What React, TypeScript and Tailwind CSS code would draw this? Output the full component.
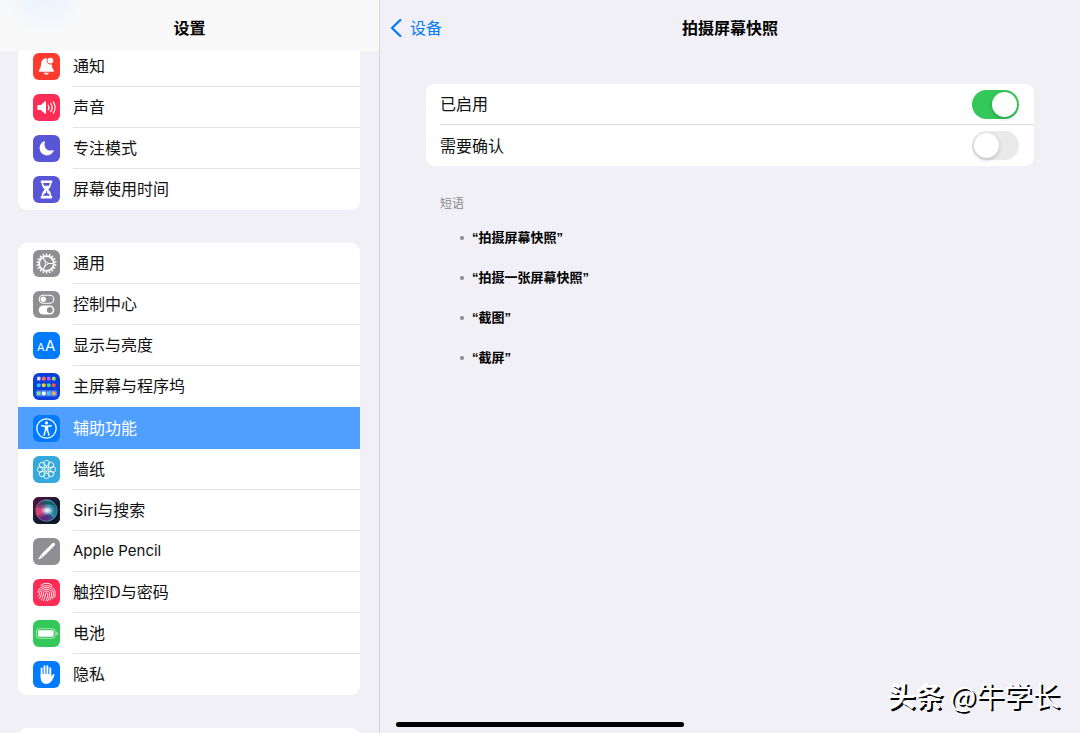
import { useState } from 'react'
import type { ReactNode } from 'react'
import clsx from 'clsx'

type Item = {
  id: string
  label: string
  tile: string
  icon: ReactNode
  latin?: boolean
}

const dots = [
  ['#e4d8ff', '#ff6b5e', '#c45cf0', '#9be25a'],
  ['#35c8ff', '#ffc93c', '#3fe08a', '#ff5148'],
]

const gearTeeth = Array.from({ length: 18 }, (_, i) => i * 20)
const petals = Array.from({ length: 8 }, (_, i) => i * 45)

const alerts: Item[] = [
  {
    id: 'notifications',
    label: '通知',
    tile: 'bg-[#ff3b30]',
    icon: (
      <>
        <path
          fill="#fff"
          d="M12.6 5.2c-2.9.5-4.3 2.7-4.5 5.4-.2 3.2-.5 4.7-2 6.3-.6.7-.4 1.8.7 1.8h13.2c1.1 0 1.3-1.1.7-1.8-1.3-1.4-1.7-2.8-1.9-5.5a4 4 0 0 1-4.6-5.8z"
        />
        <circle cx="17.4" cy="7.6" r="2.9" fill="#fff" />
        <path fill="#fff" d="M10.9 19.7h5c-.3 1.3-1.2 2-2.5 2s-2.2-.7-2.5-2z" />
      </>
    ),
  },
  {
    id: 'sounds',
    label: '声音',
    tile: 'bg-[#ff2d55]',
    icon: (
      <>
        <path
          fill="#fff"
          d="M5.3 11h2.5l4-3.4c.6-.5 1.2-.2 1.2.5v10.8c0 .7-.6 1-1.2.5l-4-3.4H5.3c-.6 0-.9-.4-.9-.9v-3.2c0-.5.3-.9.9-.9z"
        />
        <g fill="none" stroke="#fff" strokeWidth="1.2" strokeLinecap="round">
          <path d="M15.3 11.3a4 4 0 0 1 0 4.4" />
          <path d="M17.8 9.5a7 7 0 0 1 0 8" />
          <path d="M20.3 7.9a10 10 0 0 1 0 11.2" />
        </g>
      </>
    ),
  },
  {
    id: 'focus',
    label: '专注模式',
    tile: 'bg-[#5856d6]',
    icon: (
      <path
        fill="#fff"
        d="M11.2 6.3c.5-.2.9.2.7.7-1.8 5.5 2.5 10 8 8.2.6-.2 1 .2.7.8a7.3 7.3 0 1 1-9.4-9.7z"
      />
    ),
  },
  {
    id: 'screen-time',
    label: '屏幕使用时间',
    tile: 'bg-[#5856d6]',
    icon: (
      <>
        <path
          fill="#fff"
          d="M8.5 4.5h10c.5 0 .8.3.8.8v.9c0 .5-.3.8-.8.8h-.2c-.1 3-1.2 4.7-3.1 6.5 1.9 1.8 3 3.5 3.1 6.5h.2c.5 0 .8.3.8.8v.9c0 .5-.3.8-.8.8h-10c-.5 0-.8-.3-.8-.8v-.9c0-.5.3-.8.8-.8h.2c.1-3 1.2-4.7 3.1-6.5-1.9-1.8-3-3.5-3.1-6.5h-.2c-.5 0-.8-.3-.8-.8v-.9c0-.5.3-.8.8-.8z"
        />
        <path
          fill="#5856d6"
          d="M10.2 7h6.6c-.1 1-.4 1.9-.8 2.7h-5c-.4-.8-.7-1.7-.8-2.7zM13 15.3h1v1.8c1.5.4 2.5 1.2 2.8 2.6h-6.6c.3-1.4 1.3-2.2 2.8-2.6z"
        />
      </>
    ),
  },
]

const general: Item[] = [
  {
    id: 'general',
    label: '通用',
    tile: 'bg-[#8e8e93]',
    icon: (
      <g stroke="#fff" fill="none">
        {gearTeeth.map((a) => (
          <path key={a} d="M13.5 3.5v2.2" strokeWidth="1.5" transform={`rotate(${a} 13.5 13.5)`} />
        ))}
        <circle cx="13.5" cy="13.5" r="7.3" strokeWidth="1.7" />
        <circle cx="13.5" cy="13.5" r="1.3" strokeWidth="1" />
        <path strokeWidth="1.2" d="M14.8 13.5h6M12.8 12.4l-3-5.2M12.8 14.6l-3 5.2" />
      </g>
    ),
  },
  {
    id: 'control-center',
    label: '控制中心',
    tile: 'bg-[#8e8e93]',
    icon: (
      <>
        <rect x="6.2" y="4.2" width="14.6" height="8" rx="4" fill="none" stroke="#fff" strokeWidth="1.1" />
        <circle cx="10.3" cy="8.2" r="2.7" fill="#fff" />
        <rect x="5.7" y="14.5" width="15.6" height="9" rx="4.5" fill="#fff" />
        <circle cx="16.8" cy="19" r="2.9" fill="#8e8e93" />
      </>
    ),
  },
  {
    id: 'display',
    label: '显示与亮度',
    tile: 'bg-[#007aff]',
    icon: (
      <g fill="#fff" fontFamily="Inter, sans-serif">
        <text x="4" y="19" fontSize="11">A</text>
        <text x="12" y="19" fontSize="15">A</text>
      </g>
    ),
  },
  {
    id: 'home-screen',
    label: '主屏幕与程序坞',
    tile: 'bg-[#0b3fdb]',
    icon: (
      <>
        {dots.map((row, y) =>
          row.map((color, x) => (
            <rect key={`${x}-${y}`} x={4 + x * 5} y={3.8 + y * 6.6} width="3.6" height="3.6" rx=".9" fill={color} />
          )),
        )}
        <rect x="2.7" y="17.3" width="21.6" height="6.2" rx="2" fill="#4f7df0" />
        <rect x="4" y="18.6" width="3.6" height="3.6" rx=".9" fill="#7be88a" />
        <rect x="9" y="18.6" width="3.6" height="3.6" rx=".9" fill="#fff" />
        <rect x="14" y="18.6" width="3.6" height="3.6" rx=".9" fill="#43c6ff" />
        <rect x="19" y="18.6" width="3.6" height="3.6" rx=".9" fill="#ffa25c" />
      </>
    ),
  },
  {
    id: 'accessibility',
    label: '辅助功能',
    tile: 'bg-[#007aff]',
    icon: (
      <>
        <circle cx="13.5" cy="13.5" r="9.7" fill="none" stroke="#fff" strokeWidth="1.3" />
        <circle cx="13.5" cy="7.9" r="1.6" fill="#fff" />
        <path
          fill="none"
          stroke="#fff"
          strokeWidth="1.4"
          strokeLinecap="round"
          strokeLinejoin="round"
          d="M8.6 10.7l3.9.5h2l3.9-.5M12.5 11.2v4l-1.5 5M14.5 11.2v4l1.5 5"
        />
        <path fill="#fff" d="M12.1 11h2.8v4.6h-2.8z" />
      </>
    ),
  },
  {
    id: 'wallpaper',
    label: '墙纸',
    tile: 'bg-[#34aadc]',
    icon: (
      <g fill="none" stroke="#fff" strokeWidth=".9">
        {petals.map((a) => (
          <circle key={a} cx="13.5" cy="7.2" r="2.8" transform={`rotate(${a} 13.5 13.5)`} />
        ))}
        {petals.map((a) => (
          <path key={a} d="M13.5 10v1.8" transform={`rotate(${a} 13.5 13.5)`} />
        ))}
        <circle cx="13.5" cy="13.5" r="1.8" />
      </g>
    ),
  },
  {
    id: 'siri',
    label: 'Siri与搜索',
    tile: 'bg-[#1b1230]',
    icon: (
      <>
        <defs>
          <linearGradient id="siri-back" x1="0" y1="0" x2="1" y2="1">
            <stop offset="0" stopColor="#5a1040" />
            <stop offset=".5" stopColor="#191a38" />
            <stop offset="1" stopColor="#071823" />
          </linearGradient>
          <linearGradient id="siri-orb" x1="0" y1=".6" x2="1" y2=".4">
            <stop offset="0" stopColor="#c01f62" />
            <stop offset=".4" stopColor="#7d4a86" />
            <stop offset=".65" stopColor="#2f9fa8" />
            <stop offset="1" stopColor="#1a5f8a" />
          </linearGradient>
          <radialGradient id="siri-glow">
            <stop offset="0" stopColor="#fff" />
            <stop offset=".35" stopColor="#e4f0ff" stopOpacity=".8" />
            <stop offset="1" stopColor="#8fb8ff" stopOpacity="0" />
          </radialGradient>
        </defs>
        <rect width="27" height="27" fill="url(#siri-back)" />
        <circle cx="13.5" cy="13.5" r="10.8" fill="url(#siri-orb)" />
        <path fill="#0f4a50" opacity=".7" d="M4 9.5a10.8 10.8 0 0 1 19 0c-5-3-13-3-19 0z" />
        <path fill="#3a1a78" opacity=".6" d="M5 20c4 .2 8-1 10-4l6 5a10.500 10.500 0 0 1-16-1z" />
        <path fill="#e8476e" opacity=".8" d="M3.5 11c4-.5 7 .5 10 2.5-3 2.5-6 4.5-9.5 4.5z" />
        <ellipse cx="14.2" cy="13.5" rx="7" ry="5" fill="url(#siri-glow)" />
        <circle cx="13.5" cy="13.5" r="10.8" fill="none" stroke="#8ad6c8" strokeWidth=".6" opacity=".7" />
      </>
    ),
  },
  {
    id: 'pencil',
    label: 'Apple Pencil',
    latin: true,
    tile: 'bg-[#8e8e93]',
    icon: (
      <>
        <path stroke="#fff" strokeWidth="3.2" strokeLinecap="round" d="M9.2 17.7L20.5 6.4" />
        <path fill="#fff" d="M7.6 17.2l2.2 2.2-3.8 1.9c-.5.2-.8-.1-.6-.6z" />
        <path stroke="#8e8e93" strokeWidth=".7" d="M7.4 16.8l2.9 2.9" />
      </>
    ),
  },
  {
    id: 'touch-id',
    label: '触控ID与密码',
    tile: 'bg-[#ff2d55]',
    icon: (
      <g fill="none" stroke="#fff" strokeWidth=".9" strokeLinecap="round">
        <path d="M8 6.1a9.4 9.4 0 0 1 11 0" />
        <path d="M4.9 13.5c.2-3.7 3.9-6.9 8.6-6.9s8.600 3.100 8.700 8c0 1.300-.2 2.500-.5 3.600" />
        <path d="M5.3 17.6c1.1-1.3 1.2-2.8 1.4-4.3.5-2.8 3.2-4.9 6.8-4.9 4 0 6.9 2.5 6.9 6.2 0 1.9-.4 3.6-1 5.1" />
        <path d="M6.4 19.5c1.5-1.8 1.9-3.6 2.1-5.6.2-2.1 2.2-3.7 5-3.7s5.1 1.6 5.1 4.4c0 2.4-.6 4.6-1.6 6.4" />
        <path d="M8.2 20.9c1.5-2 2.1-4.1 2.2-6.5.1-1.5 1.4-2.4 3.1-2.4s3.2 1 3.2 2.7c0 2.700-.8 5-2.100 7.100" />
        <path d="M10.4 21.7c1.2-2 1.8-4.2 1.9-6.8 0-1.4 2.4-1.5 2.5 0-.1 2.5-.7 4.7-1.9 6.9" />
      </g>
    ),
  },
  {
    id: 'battery',
    label: '电池',
    tile: 'bg-[#34c759]',
    icon: (
      <>
        <rect x="3.4" y="8.7" width="18.8" height="9.6" rx="2.8" fill="none" stroke="#fff" strokeWidth=".8" opacity=".7" />
        <rect x="5" y="10.2" width="15.6" height="6.6" rx="1.3" fill="#fff" />
        <path fill="#fff" opacity=".7" d="M23.3 11.6c.9.3 1.3 1 1.3 1.9s-.4 1.6-1.3 1.9z" />
      </>
    ),
  },
  {
    id: 'privacy',
    label: '隐私',
    tile: 'bg-[#007aff]',
    icon: (
      <>
        <g stroke="#fff" strokeWidth="1.9" strokeLinecap="round" fill="none">
          <path d="M8.6 7.5v8M11.5 5.3v9M14.4 5.2v9M17.3 7.2v9" />
        </g>
        <path
          fill="#fff"
          d="M7.65 13h10.6v2.8l1.7-2.3c.5-.7 1.6-.5 1.4.4-.6 2.7-1.9 5-3.4 6.9-1.2 1.5-2.7 2.1-4.7 2.1-3.3 0-5.6-2.5-5.6-6.1z"
        />
      </>
    ),
  },
]

const phrases = ['拍摄屏幕快照', '拍摄一张屏幕快照', '截图', '截屏']

function NavRow({
  item,
  active,
  line,
  onSelect,
}: {
  item: Item
  active: boolean
  line: boolean
  onSelect: (id: string) => void
}) {
  return (
    <li>
      <a
        href={`#${item.id}`}
        aria-current={active ? 'page' : undefined}
        onClick={() => onSelect(item.id)}
        className={clsx(
          'flex items-center gap-[13px] pl-[15px]',
          active ? 'h-[42px] bg-[#4e9fff] text-white' : 'h-[41px]',
        )}
      >
        <span className={clsx('size-[27px] shrink-0 overflow-hidden rounded-md', item.tile)}>
          <svg viewBox="0 0 27 27" className="size-full" aria-hidden="true">
            {item.icon}
          </svg>
        </span>
        <span
          className={clsx(
            'flex h-full flex-1 items-center border-b',
            line ? 'border-[#e2e2e4]' : 'border-transparent',
            item.latin && 'text-[15px]',
          )}
        >
          {item.label}
        </span>
      </a>
    </li>
  )
}

function NavGroup({
  items,
  active,
  className,
  onSelect,
}: {
  items: Item[]
  active: string
  className: string
  onSelect: (id: string) => void
}) {
  return (
    <ul className={clsx('shrink-0 overflow-hidden bg-white', className)}>
      {items.map((item, i) => (
        <NavRow
          key={item.id}
          item={item}
          active={item.id === active}
          line={i < items.length - 1 && item.id !== active && items[i + 1].id !== active}
          onSelect={onSelect}
        />
      ))}
    </ul>
  )
}

function SwitchRow({ id, label, on, line }: { id: string; label: string; on: boolean; line?: boolean }) {
  return (
    <div className="pl-3.5">
      <div className={clsx('flex h-[41px] items-center justify-between pr-[15px]', line && 'border-b border-[#dcdcde]')}>
        <label htmlFor={id}>{label}</label>
        <input
          id={id}
          type="checkbox"
          role="switch"
          defaultChecked={on}
          className="h-[29px] w-[47px] cursor-pointer appearance-none rounded-full bg-[#e9e9ea] p-0.5 before:block before:size-[25px] before:rounded-full before:bg-white before:shadow-[0_2px_4px_rgba(0,0,0,0.18)] checked:bg-[#34c759] checked:before:translate-x-[18px]"
        />
      </div>
    </div>
  )
}

export default function App() {
  const [active, setActive] = useState('accessibility')

  return (
    <div
      lang="zh-CN"
      className="relative flex h-screen overflow-hidden bg-[#f1f0f6] font-['Inter','Noto_Sans_CJK_SC',sans-serif] text-base text-[#111]"
    >
      <aside className="flex w-[380px] shrink-0 flex-col overflow-hidden border-r border-[#d6d6da]">
        <header className="z-10 flex h-[51px] shrink-0 items-center justify-center bg-[#f9f9f9] bg-[radial-gradient(circle_at_45px_-8px,#e8f2ff_0,#f9f9f9_44px)] pt-1">
          <h1 className="font-semibold text-black">设置</h1>
        </header>

        {/* the list is scrolled a little way under the header */}
        <nav className="-mt-[5px] flex flex-col gap-[33px] pr-[19px] pl-[18px]">
          <NavGroup items={alerts} active={active} className="rounded-b-[9px]" onSelect={setActive} />
          <NavGroup items={general} active={active} className="rounded-[9px]" onSelect={setActive} />
          <div className="h-20 shrink-0 rounded-[9px] bg-white" />
        </nav>
      </aside>

      <main className="min-w-0 flex-1">
        <header className="grid h-[51px] grid-cols-[1fr_auto_1fr] items-center px-2.5 pt-1">
          <a href="#devices" className="flex items-center gap-2 text-[#007aff]">
            <svg
              viewBox="0 0 12 20"
              className="h-5 w-3"
              fill="none"
              stroke="currentColor"
              strokeWidth="2.3"
              strokeLinecap="round"
              strokeLinejoin="round"
              aria-hidden="true"
            >
              <path d="M10.3 2L2 10l8.3 8" />
            </svg>
            设备
          </a>
          <h2 className="font-semibold text-black">拍摄屏幕快照</h2>
        </header>

        <div className="px-[46px] pt-[33px]">
          <section className="overflow-hidden rounded-[9px] bg-white">
            <SwitchRow id="enabled" label="已启用" on line />
            <SwitchRow id="confirm" label="需要确认" on={false} />
          </section>

          <section className="px-3.5 pt-7">
            <h3 className="text-xs leading-5 text-[#8a8a8e]">短语</h3>
            <ul className="pt-1 pl-5 font-['Liberation_Sans','Noto_Sans_CJK_SC',sans-serif]">
              {phrases.map((p) => (
                <li key={p} className="flex h-10 items-center gap-2 text-[13px] font-semibold text-black">
                  <span className="size-1 rounded-full bg-[#8a8a8e]" />
                  “{p}”
                </li>
              ))}
            </ul>
          </section>
        </div>
      </main>

      <p className="absolute right-5 bottom-[18px] font-['Noto_Sans_CJK_SC',sans-serif] text-[28px] leading-10 text-white [text-shadow:2px_2px_0_#000]">
        <span className="font-bold">头条</span> @牛学长
      </p>
      <div className="absolute bottom-1.5 left-1/2 h-[5px] w-72 -translate-x-1/2 rounded-full bg-black" />
    </div>
  )
}
